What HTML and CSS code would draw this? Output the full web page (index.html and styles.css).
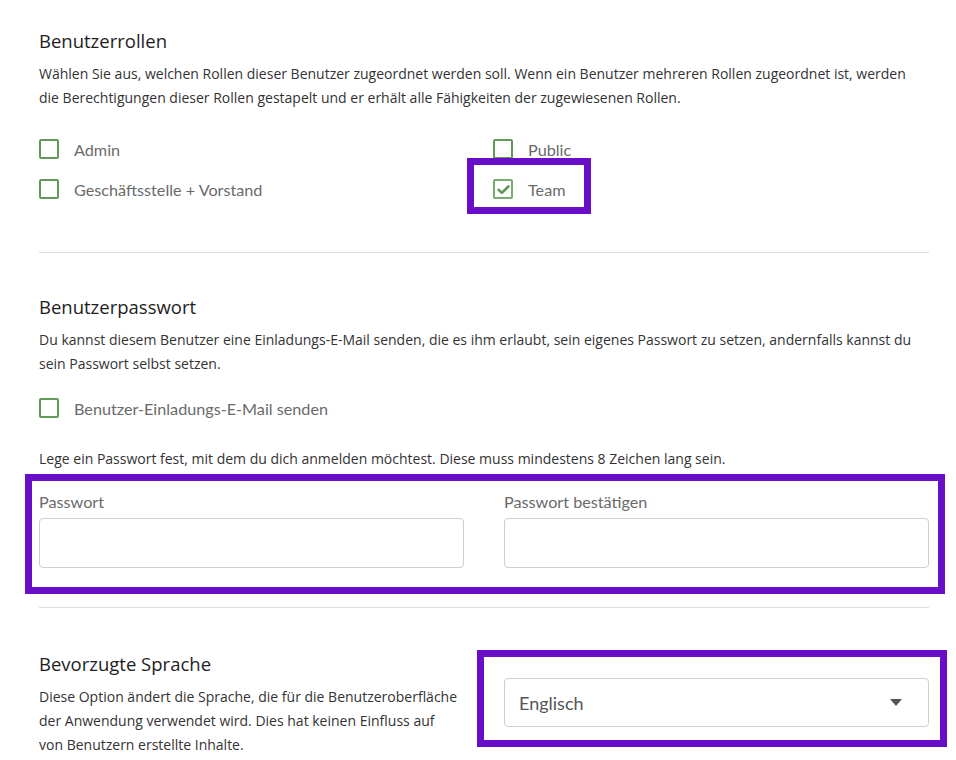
FILE: index.html
```html
<!DOCTYPE html>
<html lang="de">
<head>
<meta charset="utf-8">
<title>Benutzer bearbeiten</title>
<link rel="stylesheet" href="styles.css">
</head>
<body>
<main class="form">
  <section class="section">
    <h2 class="section-title">Benutzerrollen</h2>
    <p class="section-text">Wählen Sie aus, welchen Rollen dieser Benutzer zugeordnet werden soll. Wenn ein Benutzer mehreren Rollen zugeordnet ist, werden die Berechtigungen dieser Rollen gestapelt und er erhält alle Fähigkeiten der zugewiesenen Rollen.</p>
    <div class="role-grid">
      <label class="check"><span class="check-box"></span><span class="check-label">Admin</span></label>
      <label class="check"><span class="check-box"></span><span class="check-label">Public</span></label>
      <label class="check"><span class="check-box"></span><span class="check-label">Geschäftsstelle + Vorstand</span></label>
      <label class="check">
        <span class="check-box is-checked">
          <svg viewBox="0 0 16 16" width="15" height="15"><path d="M2.8 8.4 L6.2 11.6 L13.2 4.8" fill="none" stroke="#5a9a4e" stroke-width="2.8" stroke-linecap="round" stroke-linejoin="round"/></svg>
        </span>
        <span class="check-label">Team</span>
        <span class="mark mark-team"></span>
      </label>
    </div>
  </section>

  <hr class="divider divider-roles">

  <section class="section section-password">
    <h2 class="section-title">Benutzerpasswort</h2>
    <p class="section-text">Du kannst diesem Benutzer eine Einladungs-E-Mail senden, die es ihm erlaubt, sein eigenes Passwort zu setzen, andernfalls kannst du sein Passwort selbst setzen.</p>
    <label class="check check-single"><span class="check-box"></span><span class="check-label">Benutzer-Einladungs-E-Mail senden</span></label>
    <p class="section-text hint">Lege ein Passwort fest, mit dem du dich anmelden möchtest. Diese muss mindestens 8 Zeichen lang sein.</p>
    <div class="field-grid">
      <div class="field">
        <label class="field-label" for="pw1">Passwort</label>
        <input class="field-input" id="pw1" type="password">
      </div>
      <div class="field">
        <label class="field-label" for="pw2">Passwort bestätigen</label>
        <input class="field-input" id="pw2" type="password">
      </div>
      <span class="mark mark-password"></span>
    </div>
  </section>

  <hr class="divider divider-password">

  <section class="section lang">
    <div class="lang-info">
      <h2 class="section-title">Bevorzugte Sprache</h2>
      <p class="section-text">Diese Option ändert die Sprache, die für die Benutzeroberfläche der Anwendung verwendet wird. Dies hat keinen Einfluss auf von Benutzern erstellte Inhalte.</p>
    </div>
    <div class="lang-control">
      <div class="select">
        <span class="select-value">Englisch</span>
        <span class="select-caret"></span>
      </div>
      <span class="mark mark-select"></span>
    </div>
  </section>
</main>
</body>
</html>
```

FILE: styles.css
```css
* { box-sizing: border-box; }

html, body {
  margin: 0;
  padding: 0;
  background: #fff;
}

body {
  font-family: "Open Sans", "Noto Sans", sans-serif;
  color: #222;
}

.form {
  width: 890px;
  margin-left: 39px;
  padding-top: 27px;
}

.section-title {
  margin: 0;
  font-size: 18.5px;
  font-weight: 400;
  line-height: 28px;
  color: #1e1e1e;
}

.section-text {
  margin: 7px 0 0;
  font-size: 14px;
  line-height: 24px;
  color: #333;
}

/* role checkboxes */
.role-grid {
  display: grid;
  grid-template-columns: 454px 1fr;
  row-gap: 8px;
  margin-top: 23px;
}

.check {
  display: flex;
  align-items: center;
  height: 32px;
  position: relative;
}

.check-box {
  width: 20px;
  height: 20px;
  border: 2px solid #5f9a56;
  border-radius: 2px;
  flex: none;
  display: flex;
  align-items: center;
  justify-content: center;
}

.check-box.is-checked {
  border-color: #78ab70;
}

.check-label {
  margin-left: 15px;
  font-family: "Lato", sans-serif;
  font-size: 16.2px;
  color: #6a6a6a;
}

.check-single {
  margin-top: 16px;
}

.hint {
  margin-top: 23px;
}

.divider {
  border: 0;
  border-top: 1px solid #dedede;
  margin: 0;
}

.divider-roles { margin-top: 47px; }
.divider-roles + .section { margin-top: 40px; }
.divider-password { margin-top: 39px; }
.divider-password + .section { margin-top: 42px; }

/* password fields */
.field-grid {
  position: relative;
  display: grid;
  grid-template-columns: 425px 425px;
  column-gap: 40px;
  margin-top: 21px;
}

.field-label {
  display: block;
  font-family: "Lato", sans-serif;
  font-size: 16.2px;
  line-height: 20px;
  color: #6a6a6a;
}

.field-input {
  display: block;
  width: 100%;
  height: 50px;
  margin: 6px 0 0;
  border: 1px solid #cfcfcf;
  border-radius: 4px;
  background: #fff;
}

/* language */
.lang {
  display: grid;
  grid-template-columns: 425px 425px;
  column-gap: 40px;
  align-items: start;
}

.lang-info {
  padding-right: 5px;
}

.lang-control {
  position: relative;
  padding-top: 28px;
}

.select {
  height: 49px;
  border: 1px solid #cfcfcf;
  border-radius: 4px;
  display: flex;
  align-items: center;
  justify-content: space-between;
  padding: 0 26px 0 14px;
}

.select-value {
  font-family: "Lato", sans-serif;
  font-size: 18px;
  color: #555;
}

.select-caret {
  width: 0;
  height: 0;
  border-left: 6px solid transparent;
  border-right: 6px solid transparent;
  border-top: 7px solid #555;
}

/* highlight frames */
.mark {
  position: absolute;
  border: 7px solid #6a0dc8;
  pointer-events: none;
}

.mark-team {
  left: -26px;
  top: -15px;
  width: 124px;
  height: 56px;
}

.mark-password {
  left: -14px;
  top: -18px;
  right: -16px;
  bottom: -26px;
}

.mark-select {
  left: -27px;
  top: 0;
  right: -18px;
  bottom: -20px;
}
```
